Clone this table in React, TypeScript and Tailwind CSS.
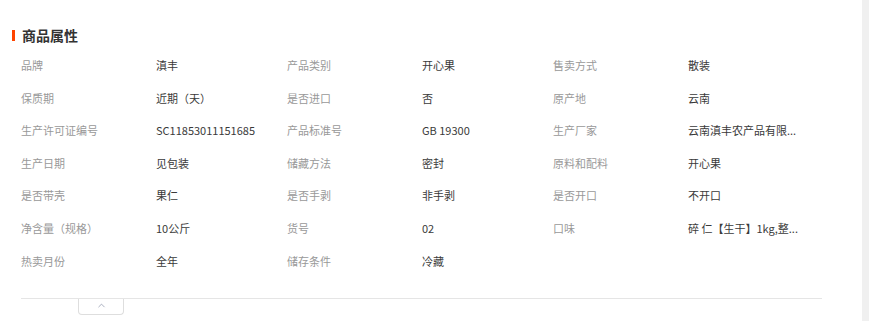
import { ChevronUp } from 'lucide-react'

const attrs: [string, string][] = [
  ['品牌', '滇丰'],
  ['产品类别', '开心果'],
  ['售卖方式', '散装'],
  ['保质期', '近期（天）'],
  ['是否进口', '否'],
  ['原产地', '云南'],
  ['生产许可证编号', 'SC11853011151685'],
  ['产品标准号', 'GB 19300'],
  ['生产厂家', '云南滇丰农产品有限...'],
  ['生产日期', '见包装'],
  ['储藏方法', '密封'],
  ['原料和配料', '开心果'],
  ['是否带壳', '果仁'],
  ['是否手剥', '非手剥'],
  ['是否开口', '不开口'],
  ['净含量（规格）', '10公斤'],
  ['货号', '02'],
  ['口味', '碎 仁【生干】1kg,整...'],
  ['热卖月份', '全年'],
  ['储存条件', '冷藏'],
]

export default function App() {
  return (
    <div
      className="flex h-[321px] w-full overflow-hidden bg-white"
      style={{ fontFamily: '"Noto Sans CJK SC", "Liberation Sans", sans-serif' }}
    >
      <div className="flex-1 pl-[21px] pt-[25px]">
        {/* Title */}
        <div className="flex h-[20px] items-center">
          <span className="ml-[-9px] mr-[7px] h-[11px] w-[3px] bg-[#ff4400]" />
          <h2 className="text-[14px] font-bold leading-[20px] text-[#333]">商品属性</h2>
        </div>

        {/* Attributes */}
        <div className="mt-[4px] grid w-[801px] grid-cols-[135px_131px_135px_131px_135px_134px]">
          {attrs.map(([label, value]) => (
            <div key={label} className="contents">
              <span className="h-[32.6px] whitespace-nowrap text-[11px] leading-[32.6px] text-[#999]">{label}</span>
              <span className="h-[32.6px] whitespace-nowrap text-[11px] leading-[32.6px] text-[#3a3a3a]">
                {value}
              </span>
            </div>
          ))}
        </div>

        {/* Divider + collapse */}
        <div className="mt-[21px] w-[801px] border-t border-[#e5e5e5]">
          <button className="ml-[57px] flex h-[16px] w-[46px] items-center justify-center rounded-b-[4px] border border-t-0 border-[#dedede] pb-[2px] text-[#8a93a8]">
            <ChevronUp size={11} strokeWidth={1.6} />
          </button>
        </div>
      </div>
      <div className="w-[7px] bg-[#f0f0f0]" />
    </div>
  )
}
